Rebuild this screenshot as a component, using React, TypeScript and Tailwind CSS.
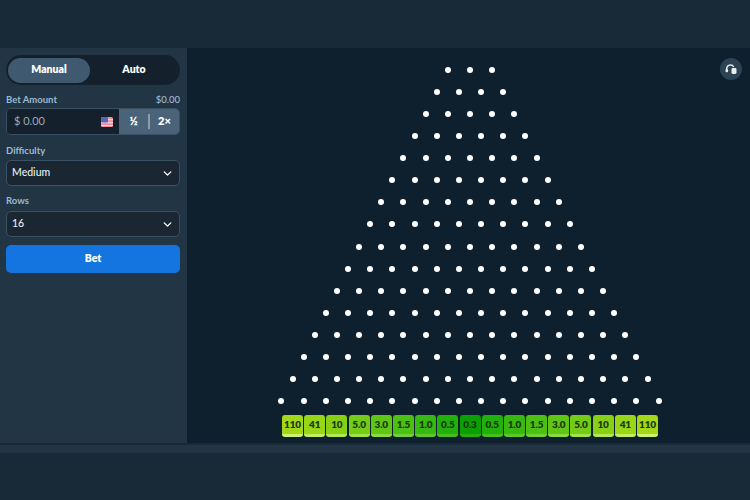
import React from 'react';
import { ChevronDown } from 'lucide-react';

const pegRows = Array.from({ length: 16 }, (_, i) => i + 3);

const buckets = [
  { label: '110', color: 'bg-[#a2d818]', lip: 'border-[#d0f070]' },
  { label: '41', color: 'bg-[#98d618]', lip: 'border-[#c4ec60]' },
  { label: '10', color: 'bg-[#88d016]', lip: 'border-[#b4e852]' },
  { label: '5.0', color: 'bg-[#74cc18]', lip: 'border-[#a0e248]' },
  { label: '3.0', color: 'bg-[#60c616]', lip: 'border-[#8cda40]' },
  { label: '1.5', color: 'bg-[#4cc014]', lip: 'border-[#72d034]' },
  { label: '1.0', color: 'bg-[#38b812]', lip: 'border-[#5cc82a]' },
  { label: '0.5', color: 'bg-[#22b00c]', lip: 'border-[#46be20]' },
  { label: '0.3', color: 'bg-[#0aa004]', lip: 'border-[#26ac12]' },
  { label: '0.5', color: 'bg-[#22b00c]', lip: 'border-[#46be20]' },
  { label: '1.0', color: 'bg-[#38b812]', lip: 'border-[#5cc82a]' },
  { label: '1.5', color: 'bg-[#4cc014]', lip: 'border-[#72d034]' },
  { label: '3.0', color: 'bg-[#60c616]', lip: 'border-[#8cda40]' },
  { label: '5.0', color: 'bg-[#74cc18]', lip: 'border-[#a0e248]' },
  { label: '10', color: 'bg-[#88d016]', lip: 'border-[#b4e852]' },
  { label: '41', color: 'bg-[#98d618]', lip: 'border-[#c4ec60]' },
  { label: '110', color: 'bg-[#a2d818]', lip: 'border-[#d0f070]' },
];

const FlagIcon = () => (
  <svg width="12" height="10" viewBox="0 0 12 10">
    <rect width="12" height="10" rx="1.5" fill="#ee8f9c" />
    <rect y="2" width="12" height="1.2" fill="#f6d5da" />
    <rect y="5" width="12" height="1.2" fill="#f6d5da" />
    <rect y="8" width="12" height="1" fill="#f6d5da" />
    <rect width="7" height="5.5" rx="1" fill="#5a66b8" />
  </svg>
);

const SelectBox = ({ value }: { value: string }) => (
  <div className="flex h-[26px] items-center justify-between rounded-[5px] border border-[#3a5163] bg-[#1a2733] px-[5px] text-[10.5px] font-medium text-[#e6edf2]">
    <span>{value}</span>
    <ChevronDown size={13} strokeWidth={2.5} className="text-white" />
  </div>
);

const App: React.FC = () => {
  return (
    <div className="flex h-[500px] w-[750px] flex-col overflow-hidden bg-[#182a38] font-['Lato',sans-serif]">
      <div className="h-12 shrink-0 bg-[#182a38]" />

      <div className="flex h-[395px] shrink-0">
        {/* Sidebar */}
        <div className="w-[187px] shrink-0 bg-[#213545] pl-[6px] pr-[7px] pt-[7px]">
          <div className="flex h-[30px] items-center rounded-full bg-[#14212c] px-[2px] text-[10.5px] font-extrabold text-white">
            <div className="flex h-[25px] w-[82px] items-center justify-center rounded-full bg-[#3f5a70]">Manual</div>
            <div className="flex-1 text-center">Auto</div>
          </div>

          <div className="mt-[9px] flex h-[13px] items-center justify-between text-[9.5px] font-bold text-[#9db8d2]">
            <span>Bet Amount</span>
            <span className="font-medium">$0.00</span>
          </div>
          <div className="mt-[1px] flex h-[27px] overflow-hidden rounded-[5px] border border-[#3a5163]">
            <div className="flex flex-1 items-center justify-between bg-[#14212c] pl-[7px] pr-[6px] text-[11px] text-[#9aa9b5]">
              <span>$ 0.00</span>
              <FlagIcon />
            </div>
            <div className="flex w-[60px] items-center bg-[#4a6379] text-[11px] font-extrabold text-white">
              <span className="flex-1 text-center">½</span>
              <span className="h-[15px] w-[2px] bg-[#8a9dae]" />
              <span className="flex-1 text-center">2×</span>
            </div>
          </div>

          <div className="mt-[9px] h-[13px] text-[9.5px] font-bold leading-[13px] text-[#9db8d2]">Difficulty</div>
          <div className="mt-[3px]">
            <SelectBox value="Medium" />
          </div>

          <div className="mt-[8px] h-[13px] text-[9.5px] font-bold leading-[13px] text-[#9db8d2]">Rows</div>
          <div className="mt-[4px]">
            <SelectBox value="16" />
          </div>

          <div className="mt-[8px] flex h-[28px] items-center justify-center rounded-[5px] bg-[#1475e1] text-[10.5px] font-extrabold text-white">
            Bet
          </div>
        </div>

        {/* Board */}
        <div className="relative flex flex-1 flex-col items-center bg-[#0e1f2e] pl-[3px] pt-[11px]">
          <div className="absolute right-[8px] top-[10px] flex h-[22px] w-[22px] items-center justify-center rounded-full bg-[#2c4354]">
            <svg width="12" height="11" viewBox="0 0 12 11" fill="none">
              <path d="M1.7 6V4.8a3.8 3.8 0 0 1 7-2" stroke="#e8eef2" strokeWidth="1.4" />
              <rect x="0.5" y="5" width="2.6" height="3.2" rx="1" fill="#e8eef2" />
              <rect x="6.5" y="4" width="5" height="6" rx="1.4" fill="#e8eef2" />
            </svg>
          </div>

          {pegRows.map((count) => (
            <div key={count} className="flex h-[22.07px] shrink-0 items-center justify-center">
              {Array.from({ length: count }, (_, i) => (
                <div key={i} className="flex w-[22.2px] justify-center">
                  <span className="h-[6px] w-[6px] rounded-full bg-white" />
                </div>
              ))}
            </div>
          ))}

          <div className="mt-[3px] flex">
            {buckets.map((b, i) => (
              <div key={i} className="flex w-[22.2px] justify-center">
                <div
                  className={`flex h-[22px] w-[21px] items-center justify-center rounded-[3px] border-b-[3px] ${b.color} ${b.lip} text-[10px] font-extrabold tracking-[-0.2px] text-[#1b3a0a]`}
                >
                  {b.label}
                </div>
              </div>
            ))}
          </div>
        </div>
      </div>

      <div className="h-[2px] shrink-0 bg-[#182a38]" />
      <div className="h-[8px] shrink-0 bg-[#213545]" />
      <div className="flex-1 bg-[#182a38]" />
    </div>
  );
};

export default App;
